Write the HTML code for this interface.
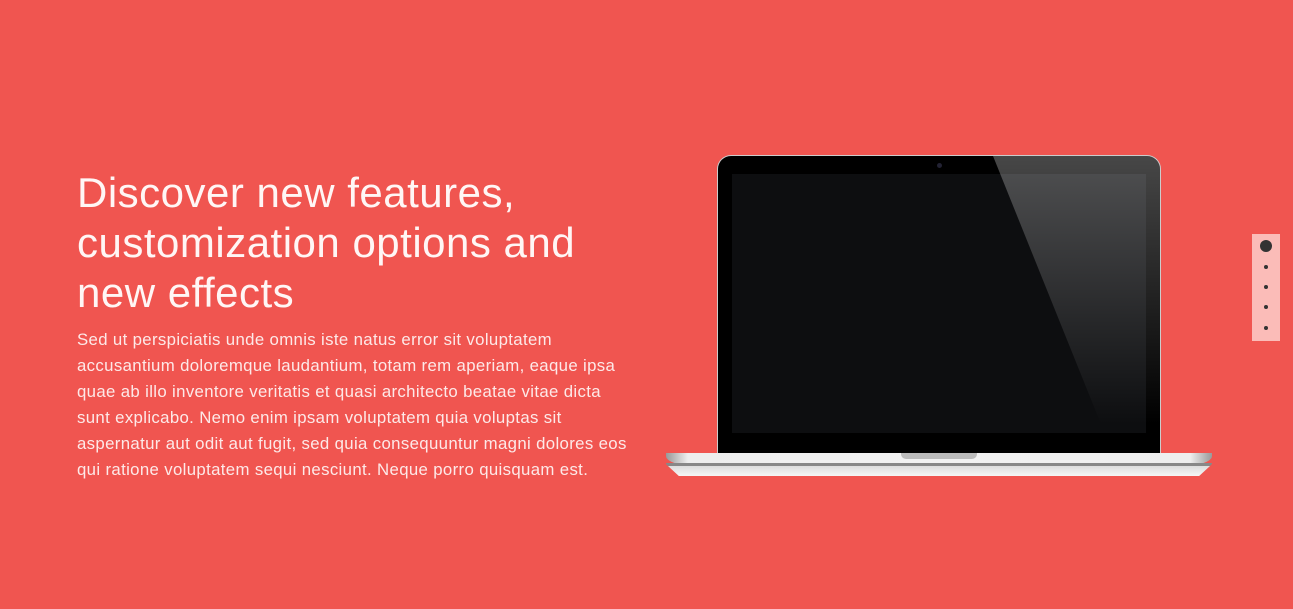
<!DOCTYPE html>
<html><head><style>
html,body{margin:0;padding:0;width:1293px;height:609px;overflow:hidden;background:#f05550;font-family:"Liberation Sans",sans-serif;color:#fff}
h1{position:absolute;left:77px;top:168px;margin:0;font-weight:normal;font-size:42px;line-height:50px;letter-spacing:0.5px;white-space:nowrap;color:#fff6f5}
p{position:absolute;left:77px;top:327px;margin:0;font-size:16.8px;line-height:26px;letter-spacing:0.35px;white-space:nowrap;color:#fde9e8}
.lid{position:absolute;left:717px;top:155px;width:444px;height:298px;background:#000;border:1px solid #ccc;border-bottom:none;border-radius:14px 14px 0 0;overflow:hidden;box-sizing:border-box}
.scr{position:absolute;left:14px;top:18px;width:414px;height:259px;background:#0d0e10}
.glare{position:absolute;left:0;top:0;width:444px;height:298px;background:linear-gradient(180deg,rgba(255,255,255,.28),rgba(255,255,255,.0) 90%);clip-path:polygon(275px 0,444px 0,444px 298px,395px 298px)}
.cam{position:absolute;left:219px;top:7px;width:5px;height:5px;border-radius:50%;background:#223}
.base{position:absolute;left:666px;top:453px;width:546px;height:13px;background:linear-gradient(90deg,#999,#eee 4%,#f2f2f2 50%,#eee 96%,#999);border-radius:0 0 30px 30px/0 0 10px 10px}
.base:after{content:"";position:absolute;left:0;right:0;bottom:0;height:3px;background:#888;border-radius:0 0 30px 30px}
.notch{position:absolute;left:901px;top:453px;width:76px;height:6px;background:#bbb;border-radius:0 0 5px 5px}
.shadow{position:absolute;left:668px;top:466px;width:542px;height:10px;background:linear-gradient(#ddd,#f6f6f6);clip-path:polygon(0 0,100% 0,98% 100%,2% 100%)}
.nav{position:absolute;left:1252px;top:234px;width:28px;height:107px;background:#fbbcb8}
.d{position:absolute;background:#333;border-radius:50%}
</style></head><body>
<h1>Discover new features,<br>customization options and<br>new effects</h1>
<p>Sed ut perspiciatis unde omnis iste natus error sit voluptatem<br>accusantium doloremque laudantium, totam rem aperiam, eaque ipsa<br>quae ab illo inventore veritatis et quasi architecto beatae vitae dicta<br>sunt explicabo. Nemo enim ipsam voluptatem quia voluptas sit<br>aspernatur aut odit aut fugit, sed quia consequuntur magni dolores eos<br>qui ratione voluptatem sequi nesciunt. Neque porro quisquam est.</p>
<div class="lid"><div class="scr"></div><div class="glare"></div><div class="cam"></div></div>
<div class="base"></div><div class="notch"></div><div class="shadow"></div>
<div class="nav">
<div class="d" style="left:8px;top:6px;width:12px;height:12px"></div>
<div class="d" style="left:12px;top:31px;width:4px;height:4px"></div>
<div class="d" style="left:12px;top:51px;width:4px;height:4px"></div>
<div class="d" style="left:12px;top:71px;width:4px;height:4px"></div>
<div class="d" style="left:12px;top:92px;width:4px;height:4px"></div>
</div>
</body></html>
